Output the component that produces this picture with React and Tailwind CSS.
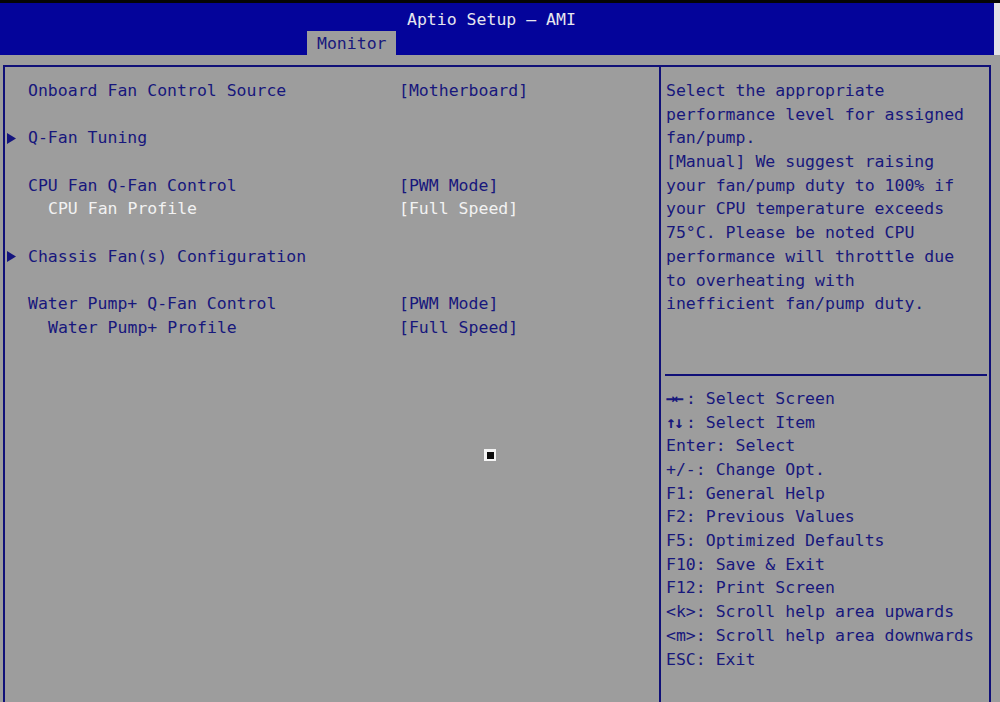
import React from "react";

const Arrow = () => (
  <svg width="9" height="11" viewBox="0 0 9 11" className="block">
    <path d="M0 0 L9 5.5 L0 11 Z" fill="#15157e" />
  </svg>
);

const leftRows = [
  { label: "Onboard Fan Control Source", value: "[Motherboard]" },
  null,
  { label: "Q-Fan Tuning", arrow: true },
  null,
  { label: "CPU Fan Q-Fan Control", value: "[PWM Mode]" },
  { label: "CPU Fan Profile", value: "[Full Speed]", sub: true, hi: true },
  null,
  { label: "Chassis Fan(s) Configuration", arrow: true },
  null,
  { label: "Water Pump+ Q-Fan Control", value: "[PWM Mode]" },
  { label: "Water Pump+ Profile", value: "[Full Speed]", sub: true },
];

const helpLines = [
  "Select the appropriate",
  "performance level for assigned",
  "fan/pump.",
  "[Manual] We suggest raising",
  "your fan/pump duty to 100% if",
  "your CPU temperature exceeds",
  "75°C. Please be noted CPU",
  "performance will throttle due",
  "to overheating with",
  "inefficient fan/pump duty.",
  "",
  "",
];

const keyLines = [
  { k: "→←", t: ": Select Screen" },
  { k: "↑↓", t: ": Select Item" },
  { t: "Enter: Select" },
  { t: "+/-: Change Opt." },
  { t: "F1: General Help" },
  { t: "F2: Previous Values" },
  { t: "F5: Optimized Defaults" },
  { t: "F10: Save & Exit" },
  { t: "F12: Print Screen" },
  { t: "<k>: Scroll help area upwards" },
  { t: "<m>: Scroll help area downwards" },
  { t: "ESC: Exit" },
];

export default function App() {
  return (
    <div
      className="relative w-[1000px] h-[702px] overflow-hidden bg-[#9d9d9d] text-[#17177c] text-[16.5px] leading-[23.7px] whitespace-pre"
      style={{ fontFamily: '"DejaVu Sans Mono", "Liberation Mono", monospace' }}
    >
      <div className="h-[3px] bg-[#050505]" />
      <div className="flex">
        <div className="w-[994px] h-[52px] bg-[#04049a] flex flex-col">
          <div className="h-[28px] pl-[407px] pt-[5px] leading-[24px] text-[#e6e6ee]">
            Aptio Setup – AMI
          </div>
          <div className="flex-1 flex">
            <div className="ml-[307px] w-[89px] bg-[#9d9d9d] pl-[10px] pt-[2px] leading-[22px] text-[#17177c]">
              Monitor
            </div>
          </div>
        </div>
        <div className="flex-1 bg-[#e2e2e6]" />
      </div>
      <div className="h-[10px]" />
      <div className="ml-[3px] w-[988px] h-[640px] border-l-2 border-t-2 border-r-2 border-[#101078] flex">
        <div className="w-[656px] border-r-2 border-[#101078] pt-[12px] flex flex-col">
          {leftRows.map((r, i) =>
            r ? (
              <div key={i} className="h-[23.7px] flex items-center">
                <div className="w-[23px] pl-[2px] flex items-center">
                  {r.arrow ? <Arrow /> : null}
                </div>
                <div
                  className={`w-[371px] ${r.sub ? "pl-[20px]" : ""} ${
                    r.hi ? "text-[#f2f2f2]" : ""
                  }`}
                >
                  {r.label}
                </div>
                {r.value ? (
                  <div className={r.hi ? "text-[#f2f2f2]" : ""}>{r.value}</div>
                ) : null}
              </div>
            ) : (
              <div key={i} className="h-[23.7px]" />
            )
          )}
        </div>
        <div className="flex-1 pt-[12px] flex flex-col">
          {helpLines.map((l, i) => (
            <div key={i} className="h-[23.7px] pl-[5px]">
              {l}
            </div>
          ))}
          <div className="h-[23.7px] flex items-center pl-[4px] pr-[2px]">
            <div className="w-full h-[2px] bg-[#101078]" />
          </div>
          {keyLines.map((l, i) => (
            <div key={i} className="h-[23.7px] pl-[5px] flex">
              {l.k ? (
                <span className="inline-block w-[19.9px] font-bold tracking-[-2px]">
                  {l.k}
                </span>
              ) : null}
              <span>{l.t}</span>
            </div>
          ))}
        </div>
      </div>
      <div className="absolute left-[484px] top-[449px] w-[12px] h-[12px] bg-[#f4f4f4] flex items-center justify-center">
        <div className="w-[7px] h-[7px] bg-[#0a0a0a]" />
      </div>
    </div>
  );
}
